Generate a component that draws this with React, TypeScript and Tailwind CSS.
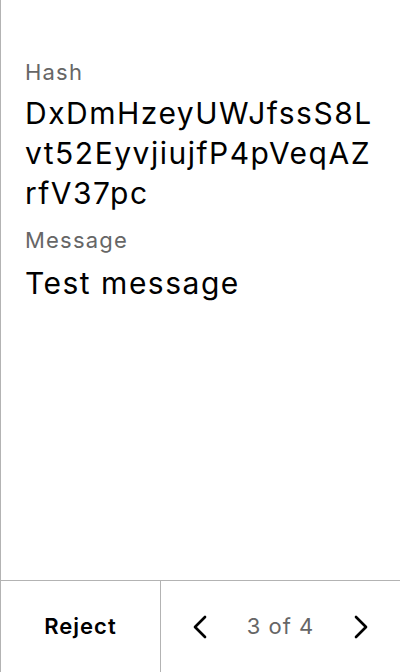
import { ChevronLeft, ChevronRight } from 'lucide-react'

export default function App() {
  return (
    <div
      className="flex h-[672px] w-[400px] flex-col border-l border-[#b3b3b3] bg-white text-black"
      style={{ fontFamily: 'Inter, "Noto Sans", sans-serif' }}
    >
      <div className="flex-1 pl-6 pr-6 pt-[56px]">
        <div className="text-[22px] leading-[32px] tracking-[0.055em] text-[#666666]">Hash</div>
        <div className="mt-[5px] break-all text-[30px] leading-[40px] tracking-[0.05em]">
          DxDmHzeyUWJfssS8Lvt52EyvjiujfP4pVeqAZrfV37pc
        </div>
        <div className="mt-[11px] text-[22px] leading-[32px] tracking-[0.055em] text-[#666666]">Message</div>
        <div className="mt-[7px] text-[30px] leading-[40px] tracking-[0.05em]">Test message</div>
      </div>
      <div className="flex h-[92px] border-t border-[#b3b3b3]">
        <button className="flex w-[160px] items-center justify-center border-r border-[#b3b3b3] text-[22px] font-semibold tracking-[0.045em]">
          Reject
        </button>
        <div className="flex flex-1 items-center justify-between px-[19px]">
          <ChevronLeft size={40} strokeWidth={1.6} />
          <span className="text-[22px] tracking-[0.045em] text-[#666666]">3 of 4</span>
          <ChevronRight size={40} strokeWidth={1.6} />
        </div>
      </div>
    </div>
  )
}
